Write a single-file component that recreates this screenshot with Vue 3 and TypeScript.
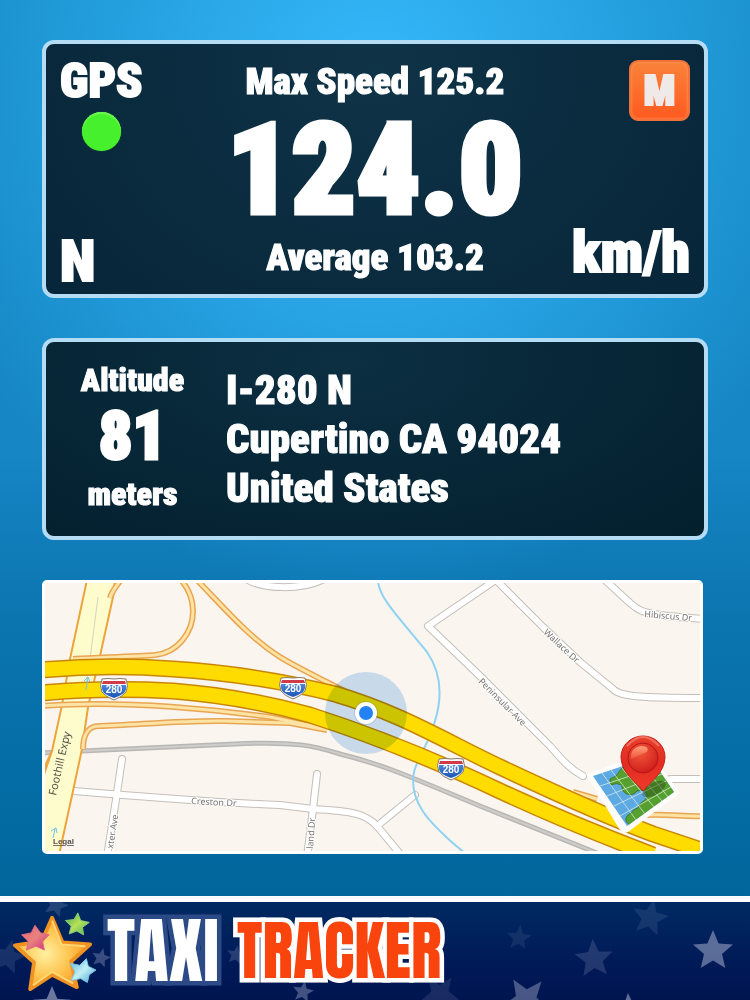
<script setup lang="ts">
import { ref } from 'vue'

interface Star { x: number; y: number; r: number; a: number; o: number }

const trip = {
  max: '125.2', speed: '124.0', average: '103.2', unit: 'km/h',
  heading: 'N', altitude: 81,
  address: ['I-280 N', 'Cupertino CA 94024', 'United States'],
}
const mode = ref('M')

const shields = [{ x: 69, y: 106 }, { x: 248, y: 105 }, { x: 406, y: 186 }]

const highways = [
  'M-4 87 C40 83 90 83 128 86 C190 90 250 101 290 111 C355 130 400 158 455 184 C510 210 560 233 608 251 L665 270',
  'M-4 110 C40 106 90 106 128 108 C180 112 225 121 265 132 C340 156 400 182 455 208 C500 229 550 250 608 272',
]
const ramps = [
  'M28 76 C70 74 95 73 110 72 C132 70 148 50 148 28 C148 14 143 5 136 -3',
  'M152 -3 C182 28 205 55 235 74 C258 88 290 103 330 123',
  'M-3 123 C70 117 150 124 225 134 L282 146',
  'M38 166 C38 151 44 143 54 143 C90 142 140 137 180 138 L245 140 L282 147',
  'M65 15 C67 8 71 3 76 -3',
  'M528 209 L552 216',
  'M600 232 C625 231 640 234 660 233',
]
const streets = [
  'M29 208 C100 214 180 220 235 222 L268 226 C310 228 322 232 332 243 L356 272',
  'M332 243 L370 212',
  'M77 176 L72 210 L62 274',
  'M272 191 L268 226 L262 274',
  'M203 -3 C220 6 255 7 277 -3',
  'M452 -4 L383 43 L435 93 L505 163 C518 178 525 186 538 193',
  'M448 -6 L498 44 L535 79 L568 106 C575 114 600 115 660 115',
  'M560 -3 L585 20 C597 30 600 32 660 36',
  'M625 196 L660 196',
]

const starPoints = ({ x, y, r, a }: Star): string =>
  Array.from({ length: 10 }, (_, i) => {
    const rad = i % 2 ? r * 0.45 : r
    const t = ((a - 90 + i * 36) * Math.PI) / 180
    return `${(x + rad * Math.cos(t)).toFixed(1)},${(y + rad * Math.sin(t)).toFixed(1)}`
  }).join(' ')

const sky: Star[] = [
  { x: 713, y: 49, r: 21, a: 0, o: 0.38 },
  { x: 594, y: 57, r: 20, a: -4, o: 0.14 },
  { x: 650, y: 16, r: 19, a: 12, o: 0.09 },
  { x: 519, y: 36, r: 13, a: 6, o: 0.08 },
  { x: 526, y: 98, r: 24, a: 40, o: 0.3 },
  { x: 629, y: 107, r: 16, a: -4, o: 0.4 },
  { x: 303, y: 90, r: 11, a: 10, o: 0.28 },
  { x: 440, y: 92, r: 20, a: 35, o: 0.1 },
  { x: 52, y: 104, r: 20, a: 0, o: 0.45 },
  { x: 56, y: 3, r: 13, a: 20, o: 0.14 },
  { x: 101, y: 56, r: 10, a: 14, o: 0.24 },
  { x: 8, y: 55, r: 18, a: 14, o: 0.1 },
  { x: 236, y: 53, r: 10, a: 10, o: 0.16 },
]
</script>

<template>
  <main class="page">
    <div class="panels">
      <section class="card gauge" aria-label="Speed">
        <div class="side">
          <div class="gps">
            <span class="mid">GPS</span>
            <i class="lamp"></i>
          </div>
          <span class="big">{{ trip.heading }}</span>
        </div>
        <div class="centre">
          <p class="line">Max Speed {{ trip.max }}</p>
          <p class="speed">{{ trip.speed }}</p>
          <p class="line">Average {{ trip.average }}</p>
        </div>
        <div class="side right">
          <button class="mode" type="button">{{ mode }}</button>
          <span class="unit">{{ trip.unit }}</span>
        </div>
      </section>

      <section class="card place" aria-label="Location">
        <div class="altitude">
          <span>Altitude</span>
          <strong>{{ trip.altitude }}</strong>
          <span>meters</span>
        </div>
        <address class="address">
          <span v-for="row in trip.address" :key="row">{{ row }}</span>
        </address>
      </section>

      <section class="map" aria-label="Map">
        <svg viewBox="0 0 655 268" preserveAspectRatio="xMidYMid slice">
          <defs>
            <linearGradient id="pinRed" x1="0" y1="0" x2="0" y2="1">
              <stop offset="0" stop-color="#e8412c" /><stop offset="0.5" stop-color="#e22b22" /><stop offset="1" stop-color="#ee3a2a" />
            </linearGradient>
            <radialGradient id="pinBall" cx="0.4" cy="0.3" r="0.7">
              <stop offset="0" stop-color="#f4583a" /><stop offset="1" stop-color="#cf201c" />
            </radialGradient>
            <linearGradient id="pinShine" x1="0" y1="0" x2="0" y2="1">
              <stop offset="0" stop-color="#ffa07c" /><stop offset="1" stop-color="#ee5238" />
            </linearGradient>
            <linearGradient id="shieldBlue" x1="0" y1="0" x2="0" y2="1">
              <stop offset="0" stop-color="#4a86d8" /><stop offset="1" stop-color="#1b55b4" />
            </linearGradient>
            <clipPath id="tile"><path d="M548 193 L605 174 L629 209 L582 243Z" /></clipPath>
          </defs>
          <rect width="655" height="268" fill="#faf5ee" />

          <g fill="none">
            <path class="rail-edge" d="M-3 170 L37 168 L190 161 C250 158 270 163 295 171 C340 182 365 194 435 223 L552 270" />
            <path class="rail" d="M-3 170 L37 168 L190 161 C250 158 270 163 295 171 C340 182 365 194 435 223 L552 270" />
            <path v-for="d in streets" :key="'e' + d" class="street-edge" :d="d" />
            <path v-for="d in streets" :key="'f' + d" class="street" :d="d" />
          </g>
          <path class="creek" d="M333 -2 C334 14 350 30 382 69 C395 88 398 112 390 138 C385 160 368 180 368 197 C368 222 385 238 395 248 C405 258 412 264 420 270" />

          <path d="M42 -3 L25 76 L17 122 L7 168 L-4 215 V272 H14 L28 208 L37 166 L43 124 L55 73 L68 14 V-3Z" fill="#fefbcd" />
          <path class="expy" d="M42 -3 L25 76 L17 122 L7 168 L-4 200 M70 -3 L68 14 L55 73 L43 124 L37 166 L28 208 L14 272 M7 168 L-4 192" />
          <path d="M53 14 L45 76 L40 108" stroke="#d2d8c0" fill="none" />

          <g fill="none">
            <path v-for="d in ramps" :key="'e' + d" class="ramp-edge" :d="d" />
            <path v-for="d in ramps" :key="'f' + d" class="ramp" :d="d" />
            <path v-for="d in highways" :key="'e' + d" class="highway-edge" :d="d" />
            <path v-for="d in highways" :key="'f' + d" class="highway" :d="d" />
          </g>
          <g class="arrow"><path d="M41 107 L43 95 M39 98 L43 94 L45 99" /><path d="M8 255 L10 246 M6 248 L11 245 L12 250" /></g>

          <g class="label">
            <text class="wide" transform="translate(11 213) rotate(-77)">Foothill Expy</text>
            <text transform="translate(146 221) rotate(3)">Creston Dr</text>
            <text transform="translate(68 266) rotate(-81)">xter Ave</text>
            <text transform="translate(268 266) rotate(-86)">land Dr</text>
            <text transform="translate(433 99) rotate(45)">Peninsular Ave</text>
            <text transform="translate(498 50) rotate(43)">Wallace Dr</text>
            <text transform="translate(599 34) rotate(5)">Hibiscus Dr</text>
          </g>

          <g v-for="(s, i) in shields" :key="i" :transform="`translate(${s.x} ${s.y})`">
            <path d="M-12 -10 Q-6 -11 0 -10 Q6 -11 12 -10 Q15 -3 12 3 Q8 8 0 11 Q-8 8 -12 3 Q-15 -3 -12 -10Z" fill="#fff" stroke="#857766" />
            <path d="M-12 -4 H12 Q13 0 10 4 Q6 7 0 9 Q-6 7 -10 4 Q-13 0 -12 -4Z" fill="url(#shieldBlue)" />
            <path d="M-11 -8 H11 L12 -5 H-12Z" fill="#d03b4b" />
            <text class="route" y="4">280</text>
          </g>

          <circle class="accuracy" cx="321" cy="130" r="41" />
          <circle cx="321" cy="130" r="12" fill="#50708a" fill-opacity="0.2" />
          <circle cx="321" cy="130" r="11" fill="#fff" />
          <circle cx="321" cy="130" r="7" fill="#2383f6" />

          <a href="#legal"><text class="legal" x="8" y="261">Legal</text></a>

          <g>
            <path d="M541 191 L605 169 L635 210 L583 249 Q578 251 575 247Z" fill="#fffdfb" />
            <g clip-path="url(#tile)">
              <rect x="540" y="165" width="95" height="85" fill="#5da9e4" />
              <path d="M571 193 L577 185 L600 165 L640 205 L590 248 L581 238 Q580 233 586 230 Q588 226 593 225 Q594 220 600 217 Q605 211 598 207 L592 208 Q588 213 582 211 Q576 208 577 202 Q571 199 566 202 L565 196Z" fill="#56a02f" stroke="#3e7a28" />
              <path d="M557 190 L591 237 M566 187 L600 231 M576 184 L609 224 M585 181 L617 218 M595 178 L623 214 M555 203 L612 184 M562 213 L617 191 M569 223 L621 198 M575 233 L626 204" stroke="#e4f1e6" stroke-opacity="0.7" fill="none" />
              <ellipse cx="609" cy="206" rx="13" ry="6" fill="#294d12" fill-opacity="0.5" transform="rotate(-30 609 206)" />
            </g>
            <path d="M598 208 C592 200 576 190 576 174 A22 21 0 0 1 620 174 C620 190 604 200 598 208Z" fill="url(#pinRed)" stroke="#c7201c" />
            <circle cx="598" cy="175" r="15" fill="url(#pinBall)" stroke="#b81614" />
            <path d="M586 176 Q585 165 596 163 Q605 163 602 169 Q594 172 586 176Z" fill="url(#pinShine)" />
            <path d="M582 163 Q598 145 614 163" stroke="#f0705c" stroke-width="2" fill="none" />
          </g>
        </svg>
      </section>
    </div>

    <footer class="brand">
      <svg class="sky" viewBox="0 0 750 98" preserveAspectRatio="xMidYMid slice" aria-hidden="true">
        <polygon v-for="(s, i) in sky" :key="i" :points="starPoints(s)" fill="#eef0ff" :fill-opacity="s.o" />
      </svg>
      <svg class="stars" viewBox="0 0 88 84" aria-hidden="true">
        <defs>
          <radialGradient id="gold" cx="0.4" cy="0.5" r="0.6">
            <stop offset="0" stop-color="#fff0a0" /><stop offset="0.55" stop-color="#ffc450" /><stop offset="1" stop-color="#f7961f" />
          </radialGradient>
          <linearGradient id="pink" x1="0" y1="0" x2="1" y2="1"><stop offset="0" stop-color="#ef5f72" /><stop offset="0.5" stop-color="#e8837f" /><stop offset="1" stop-color="#d3237a" /></linearGradient>
          <linearGradient id="lime" x1="0" y1="0" x2="1" y2="1"><stop offset="0" stop-color="#37a84a" /><stop offset="0.5" stop-color="#b7e05a" /><stop offset="1" stop-color="#3fb257" /></linearGradient>
          <linearGradient id="aqua" x1="0" y1="0" x2="1" y2="1"><stop offset="0" stop-color="#56b5e0" /><stop offset="0.5" stop-color="#c2f0f4" /><stop offset="1" stop-color="#3fa2d8" /></linearGradient>
        </defs>
        <g stroke-linejoin="round">
          <path d="M42 7 L53 33 L82 35 L62 53 L68 80 L42 67 L19 82 L23 54 L3 36 L31 32Z" fill="url(#gold)" stroke="#f09322" stroke-width="4" />
          <path d="M42 10 L52 35 L77 37 M64 76 L42 64 L22 78" fill="none" stroke="#ffd876" stroke-width="2" />
          <path d="M24 15 L30 23 L39 25 L32 32 L34 41 L25 37 L15 41 L17 32 L10 25 L20 23Z" fill="url(#pink)" stroke="#e06a86" />
          <path d="M69 2 L72 10 L81 12 L74 17 L75 25 L68 21 L60 24 L62 16 L56 10 L65 9Z" fill="url(#lime)" stroke="#8fd07a" />
          <path d="M78 50 L80 58 L88 62 L81 67 L79 75 L72 71 L62 73 L66 64 L61 55 L71 57Z" fill="url(#aqua)" stroke="#7cc6e4" />
        </g>
      </svg>
      <h1 class="title"><span class="taxi">TAXI</span><span class="tracker">TRACKER</span></h1>
    </footer>
  </main>
</template>

<style>
body { margin: 0; }
</style>

<style scoped>
.page {
  min-height: 100vh;
  display: flex;
  flex-direction: column;
  justify-content: space-between;
  background: radial-gradient(ellipse 62% 50% at 50% 10%, rgba(56, 188, 255, 0.95), rgba(56, 188, 255, 0) 100%),
    linear-gradient(#178cc8 0%, #1686c4 45%, #0b75b0 62%, #00669c 90%);
  color: #fff;
  font-family: "Roboto Condensed", Roboto, "Liberation Sans", sans-serif;
  font-weight: 900;
}
.panels {
  display: flex;
  flex-direction: column;
  gap: 40px;
  padding: 40px 42px;
}
.card {
  box-sizing: border-box;
  border: 4px solid #b5dcf5;
  border-radius: 12px;
  background: radial-gradient(ellipse 60% 130% at 50% 10%, #0f3347, #082639);
  -webkit-text-stroke: 1px currentColor;
}
.gauge {
  display: grid;
  grid-template-columns: 1fr auto 1fr;
  min-height: 258px;
  padding: 12px 14px;
}
.side {
  display: flex;
  flex-direction: column;
  justify-content: space-between;
  align-items: flex-start;
}
.right { align-items: flex-end; padding: 4px 0 2px; }
.gps { display: flex; flex-direction: column; align-items: center; gap: 6px; }
.mid { font-size: 48px; line-height: 50px; -webkit-text-stroke-width: 2px; }
.big { font-size: 58px; line-height: 42px; -webkit-text-stroke-width: 2px; }
.unit { font-size: 58px; line-height: 56px; -webkit-text-stroke-width: 2px; }
.lamp {
  width: 39px;
  height: 39px;
  border-radius: 50%;
  background: #47f02c;
  box-shadow: inset 0 2px 1px #6cf556, 0 0 1px #2ba51f;
}
.centre { padding-top: 2px; text-align: center; }
.centre p { margin: 0; }
.line { font-size: 37px; line-height: 48px; }
.centre .speed { font-size: 126px; line-height: 128px; -webkit-text-stroke-width: 5px; }
.mode {
  width: 61px;
  height: 61px;
  padding: 0;
  border: 2px solid #f0713a;
  border-radius: 9px;
  background: linear-gradient(#f9823a, #ff5a20);
  box-shadow: inset 0 0 3px #ffa060;
  color: #efe9e8;
  font: inherit;
  font-size: 42px;
  line-height: 56px;
  -webkit-text-stroke: 2px #efe9e8;
}
.place {
  display: flex;
  align-items: center;
  gap: 43px;
  min-height: 202px;
  padding: 0 36px;
  background: radial-gradient(ellipse 75% 120% at 45% 10%, #0c2f42, #03202e);
}
.altitude {
  display: flex;
  flex-direction: column;
  align-items: center;
  width: 101px;
  padding-bottom: 4px;
  font-size: 32px;
  line-height: 46px;
}
.altitude strong { font-size: 66px; font-weight: 900; line-height: 68px; -webkit-text-stroke-width: 3px; }
.address {
  display: flex;
  flex-direction: column;
  font-size: 41px;
  font-style: normal;
  line-height: 49px;
}
.map {
  margin-right: 5px;
  overflow: hidden;
  border: 3px solid #fff;
  border-radius: 5px;
  background: #faf5ee;
}
.map svg { display: block; width: 100%; }
.rail-edge { stroke: #b9b7b5; stroke-width: 5; }
.rail { stroke: #cfcdca; stroke-width: 2; }
.street-edge { stroke: #c4bfba; stroke-width: 8; stroke-linecap: round; stroke-linejoin: round; }
.street { stroke: #fff; stroke-width: 6; stroke-linecap: round; stroke-linejoin: round; }
.creek { fill: none; stroke: #8fd2f3; stroke-width: 2; }
.expy { fill: none; stroke: #eba53c; stroke-width: 2; }
.ramp-edge { stroke: #e9a552; stroke-width: 6; }
.ramp { stroke: #fde3a4; stroke-width: 3; }
.highway-edge { stroke: #c98606; stroke-width: 17; }
.highway { stroke: #ffdc00; stroke-width: 14; }
.arrow { fill: none; stroke: #6fc3e6; }
.accuracy { fill: #cce3fa; mix-blend-mode: multiply; }
.label {
  fill: #77736f;
  stroke: #fff;
  stroke-width: 2px;
  paint-order: stroke;
  font: 400 9px "Noto Sans", sans-serif;
}
.wide { fill: #55534a; font-size: 11px; stroke: #fefbcd; }
.route { fill: #fff; font: 700 10px "Liberation Sans", sans-serif; text-anchor: middle; }
.legal { fill: #55504c; font: 700 8px "Liberation Sans", sans-serif; text-decoration: underline; }
.brand {
  position: relative;
  display: flex;
  align-items: center;
  gap: 11px;
  box-sizing: border-box;
  min-height: 104px;
  padding: 0 12px;
  overflow: hidden;
  border-top: 6px solid #fff;
  background: linear-gradient(#002a63, #001a58 60%, #001550);
}
.sky { position: absolute; inset: 0; width: 100%; height: 100%; }
.stars { position: relative; width: 84px; height: 80px; flex: none; }
.title {
  position: relative;
  display: flex;
  align-items: center;
  gap: 18px;
  margin: 0;
  font-family: Anton, "Roboto Condensed", "Liberation Sans", sans-serif;
  font-weight: 400;
  line-height: 92px;
  paint-order: stroke;
  stroke-linejoin: round;
}
.taxi { font-size: 71px; -webkit-text-stroke: 9px #2b4a86; }
.tracker { color: #fa440d; font-size: 64px; -webkit-text-stroke: 9px #fff; }
</style>
